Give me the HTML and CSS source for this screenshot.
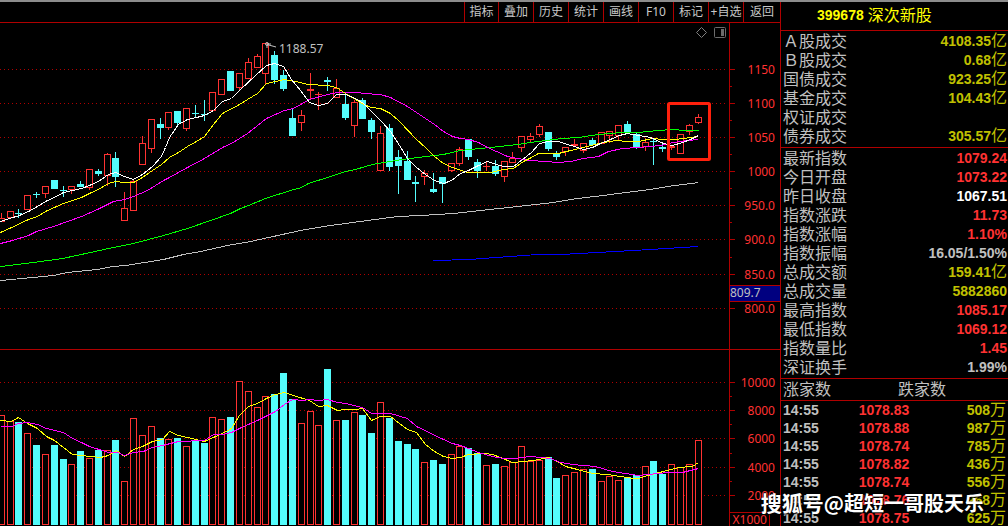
FILE: index.html
```html
<!DOCTYPE html>
<html lang="zh-CN">
<head>
<meta charset="utf-8">
<title>399678 深次新股</title>
<link rel="stylesheet" href="styles.css">
</head>
<body>
<div class="terminal">
  <main class="main">
    <nav class="toolbar">
      <button type="button">指标</button><button type="button">叠加</button><button type="button">历史</button><button type="button">统计</button><button type="button">画线</button><button type="button">F10</button><button type="button">标记</button><button type="button">+自选</button><button type="button">返回</button>
    </nav>
    <section class="panel price-panel">
      <svg class="plot" id="price-plot" role="img" aria-label="K线图"></svg>
      <svg class="axis" id="price-axis" role="img" aria-label="价格坐标"></svg>
      <div class="tools">
        <button type="button" aria-label="标记点"><svg width="12" height="12"><path d="M6.5 0.5L11.5 5.5L6.5 10.5L1.5 5.5Z" fill="none" stroke="#808080"/></svg></button>
        <button type="button" aria-label="侧栏"><svg width="12" height="12"><rect x="0.5" y="0.5" width="11" height="10" rx="1" fill="none" stroke="#6c6c6c"/><rect x="7" y="2" width="3" height="7" fill="#6c6c6c"/></svg></button>
      </div>
    </section>
    <section class="panel volume-panel">
      <svg class="plot" id="volume-plot" role="img" aria-label="成交量"></svg>
      <svg class="axis" id="volume-axis" role="img" aria-label="成交量坐标"></svg>
    </section>
  </main>
  <aside class="side">
    <h1 class="title"><b>399678</b><span>深次新股</span></h1>
    <dl class="rows">
      <div><dt>&#xFF21;股成交</dt><dd class="gold">4108.35<i>亿</i></dd></div>
      <div><dt>&#xFF22;股成交</dt><dd class="gold">0.68<i>亿</i></dd></div>
      <div><dt>国债成交</dt><dd class="gold">923.25<i>亿</i></dd></div>
      <div><dt>基金成交</dt><dd class="gold">104.43<i>亿</i></dd></div>
      <div><dt>权证成交</dt><dd></dd></div>
      <div><dt>债券成交</dt><dd class="gold">305.57<i>亿</i></dd></div>
    </dl>
    <dl class="rows">
      <div><dt>最新指数</dt><dd class="up">1079.24</dd></div>
      <div><dt>今日开盘</dt><dd class="up">1073.22</dd></div>
      <div><dt>昨日收盘</dt><dd class="flat">1067.51</dd></div>
      <div><dt>指数涨跌</dt><dd class="up">11.73</dd></div>
      <div><dt>指数涨幅</dt><dd class="up">1.10%</dd></div>
      <div><dt>指数振幅</dt><dd>16.05/1.50%</dd></div>
      <div><dt>总成交额</dt><dd class="gold">159.41<i>亿</i></dd></div>
      <div><dt>总成交量</dt><dd class="gold">5882860</dd></div>
      <div><dt>最高指数</dt><dd class="up">1085.17</dd></div>
      <div><dt>最低指数</dt><dd class="up">1069.12</dd></div>
      <div><dt>指数量比</dt><dd class="up">1.45</dd></div>
      <div><dt>深证换手</dt><dd>1.99%</dd></div>
    </dl>
    <div class="breadth"><span>涨家数</span><span>跌家数</span></div>
    <table class="ticks">
      <tbody>
        <tr><td>14:55</td><td class="up">1078.83</td><td class="gold">508<i>万</i></td></tr>
        <tr><td>14:55</td><td class="up">1078.88</td><td class="gold">987<i>万</i></td></tr>
        <tr><td>14:55</td><td class="up">1078.74</td><td class="gold">785<i>万</i></td></tr>
        <tr><td>14:55</td><td class="up">1078.82</td><td class="gold">436<i>万</i></td></tr>
        <tr><td>14:55</td><td class="up">1078.74</td><td class="gold">556<i>万</i></td></tr>
        <tr><td>14:55</td><td class="up">1078.76</td><td class="gold">968<i>万</i></td></tr>
        <tr><td>14:55</td><td class="up">1078.75</td><td class="gold">625<i>万</i></td></tr>
      </tbody>
    </table>
  </aside>
  <div class="watermark"><span>搜狐号</span>@超短一哥股天乐</div>
</div>
<script src="chart.js"></script>
</body>
</html>
```
FILE: styles.css
```css
* {
  box-sizing: border-box;
  margin: 0;
  padding: 0;
}

body {
  background: #000;
  color: #c0c0c0;
  font-family: "Liberation Sans", "Noto Sans CJK SC", sans-serif;
  font-size: 14px;
}

.terminal {
  position: relative;
  display: grid;
  grid-template-columns: minmax(0, 1fr) 228px;
  height: 100vh;
  overflow: hidden;
  border-top: 2px solid #8c8c8c;
}

.main {
  display: flex;
  flex-direction: column;
  min-height: 0;
}

.toolbar {
  display: flex;
  justify-content: flex-end;
  height: 21px;
  border-bottom: 1px solid #b00000;
}

.toolbar button {
  width: 35px;
  border: 0;
  border-left: 1px solid #b00000;
  background: none;
  color: #c8c8c8;
  font-family: "Noto Sans", "Noto Sans CJK SC", sans-serif;
  font-size: 12px;
  line-height: 20px;
  white-space: nowrap;
}

.toolbar button:first-child {
  width: 34px;
}

.toolbar button:last-child {
  width: 37px;
}

.panel {
  position: relative;
  display: grid;
  grid-template-columns: minmax(0, 1fr) 51px;
}

.price-panel {
  flex: none;
  border-bottom: 1px solid #b00000;
}

.volume-panel {
  flex: 1;
  min-height: 0;
}

.plot,
.axis {
  display: block;
  width: 100%;
  height: 326px;
  overflow: hidden;
}

.volume-panel .plot,
.volume-panel .axis {
  height: 176px;
}

.axis {
  border-left: 1px solid #b00000;
}

.tools {
  position: absolute;
  top: 4px;
  right: 54px;
  display: flex;
  gap: 7px;
}

.tools button {
  width: 12px;
  height: 12px;
  border: 0;
  background: none;
}

.tools svg {
  display: block;
}

svg text {
  font-family: "Noto Sans", sans-serif;
  font-size: 12px;
  fill: #c0c0c0;
}

svg text.scale {
  fill: #ff3232;
  text-anchor: end;
}

.side {
  border-left: 1px solid #b00000;
  min-height: 0;
  overflow: hidden;
}

.title {
  display: flex;
  gap: 4px;
  height: 29px;
  padding-left: 36px;
  border-bottom: 1px solid #b00000;
  color: #ffff00;
  font-size: 14px;
  line-height: 27px;
}

.title span {
  font-size: 16px;
  font-weight: 400;
}

.rows {
  padding: 1px 1px 1px 2px;
  border-bottom: 1px solid #b00000;
}

.rows div {
  display: flex;
  justify-content: space-between;
  height: 19px;
  line-height: 19px;
}

.rows dt,
.side i,
.breadth {
  font-family: "Noto Sans CJK SC", sans-serif;
  font-size: 16px;
  font-style: normal;
  font-weight: 400;
}

.rows dt {
  line-height: 17px;
}

.side i {
  line-height: 0;
}

.rows dd {
  font-weight: bold;
}

.up {
  color: #ff3232;
}

.gold {
  color: #c0c000;
}

.flat {
  color: #fff;
}

.breadth {
  display: grid;
  grid-template-columns: 115px 1fr;
  height: 22px;
  padding-left: 2px;
  border-bottom: 1px solid #b00000;
  line-height: 19px;
}

.ticks {
  width: 100%;
  table-layout: fixed;
  border-collapse: collapse;
  font-weight: bold;
}

.ticks td {
  height: 18px;
  padding-left: 2px;
  line-height: 18px;
}

.ticks td:last-child {
  padding-right: 2px;
  text-align: right;
}

.watermark {
  position: absolute;
  right: 24px;
  bottom: 8px;
  color: #fff;
  font-family: "Noto Sans CJK SC", sans-serif;
  font-size: 20px;
  font-weight: 700;
  line-height: 30px;
  text-shadow: 1px 1px 1px #000;
  white-space: nowrap;
}

.watermark span {
  font-size: 21px;
}
```
FILE: chart.js
```javascript
const NS = "http://www.w3.org/2000/svg";
const RED = "#ff3232";
const CYAN = "#54fcfc";
const FRAME = "#b00000";

function add(parent, name, attrs, text) {
  const el = document.createElementNS(NS, name);
  for (const key in attrs) el.setAttribute(key, attrs[key]);
  if (text) el.textContent = text;
  parent.appendChild(el);
  return el;
}

function layer(id, top) {
  return add(document.getElementById(id), "g", { transform: `translate(0,${-top})` });
}

const barX = i => Math.floor(8.82 * i - 1.7);

// kind, body top, body bottom, wick top, wick bottom
const candles = [
  "r 218 222 213 222", "r 211 218 211 218", "c 213 214 209 218", "r 195 210 195 210",
  "c 194 195 192 198", "r 186 194 186 198", "c 180 189 180 189", "c 190 191 186 197",
  "r 186 190 186 194", "c 184 187 181 187", "r 169 188 169 190", "c 171 174 169 176",
  "r 154 176 153 186", "c 158 177 152 187", "r 208 221 192 221", "r 181 211 179 211",
  "r 143 165 136 165", "r 119 149 119 153", "c 124 128 118 139", "r 112 128 112 130",
  "c 111 123 111 125", "r 108 129 108 131", "c 113 114 105 117", "c 114 115 100 121",
  "r 92 111 92 111", "r 79 95 79 95", "c 71 91 71 91", "r 73 88 73 90",
  "r 62 79 58 79", "r 56 68 54 68", "r 43 74 43 84", "c 55 80 51 84",
  "c 75 89 70 91", "c 118 136 108 136", "r 115 123 110 131", "r 89 91 73 99",
  "r 94 95 92 110", "c 80 82 77 91", "r 88 98 79 98", "c 104 118 93 120",
  "r 102 126 100 137", "c 100 119 98 119", "c 120 132 118 139", "r 133 171 126 171",
  "c 128 167 124 171", "c 157 166 150 194", "c 161 180 151 180", "c 182 184 176 202",
  "r 173 177 170 185", "c 189 192 173 193", "c 177 184 177 203", "r 163 171 163 172",
  "r 149 164 147 166", "c 139 157 139 160", "c 162 171 159 178", "r 166 167 161 171",
  "c 166 174 160 176", "r 161 177 161 182", "r 158 163 152 163", "r 136 148 136 152",
  "r 136 140 133 142", "r 126 135 124 137", "c 132 149 132 151", "c 154 157 151 160",
  "r 147 152 147 156", "r 144 146 139 147", "r 143 151 143 153", "c 140 145 138 146",
  "r 132 144 132 144", "r 131 136 131 143", "r 125 136 125 140", "c 124 133 121 133",
  "c 134 147 133 149", "r 142 147 138 151", "c 141 142 139 165", "c 147 149 143 152",
  "r 146 148 145 150", "r 134 154 134 154", "r 125 132 124 135", "r 117 123 114 124"
];

const volumes = [
  415, 421, 422, 433, 445, 454, 445, 459, 464, 451, 458, 450, 450, 440, 481, 418,
  435, 426, 438, 439, 438, 446, 441, 443, 417, 419, 417, 381, 391, 407, 396, 394,
  373, 399, 423, 411, 425, 369, 420, 420, 412, 415, 433, 402, 418, 441, 444, 449,
  462, 460, 464, 454, 446, 448, 453, 465, 464, 466, 462, 446, 461, 460, 457, 478,
  475, 472, 469, 469, 481, 476, 480, 477, 475, 466, 461, 474, 464, 467, 464, 440
];

const priceLines = {
  "#0000ff": "433,260 470,259 482,258 537,254 560,254 597,252 650,249 698,246",
  "#c0c0c0": "0,280 43,276 53,275 67,272 97,269 112,266 125,265 163,259 183,254 200,251 227,245 250,241 300,230 330,225 367,220 397,216 420,215 453,213 480,210 517,206 553,202 577,198 603,195 617,193 650,189 667,186 698,182",
  "#00ff00": "0,266 33,262 62,258 90,252 108,248 133,243 163,235 187,228 213,219 230,213 240,208 248,205 265,198 290,190 301,187 308,183 327,177 345,171 355,169 372,164 395,160 417,157 443,154 460,150 490,147 517,144 537,141 562,138 578,137 598,134 622,132 638,132 657,130 673,129 683,130 698,130",
  "#ff00ff": "0,243 12,240 28,235 36,231 53,226 81,216 97,209 113,201 124,199 133,196 147,190 163,180 169,177 187,167 204,158 222,147 231,143 247,133 266,118 275,114 284,110 293,108 309,99 327,94 337,92 357,92 363,93 380,94 390,97 407,106 416,112 425,118 434,124 443,131 452,136 460,138 468,139 478,142 487,147 496,151 507,156 517,158 530,160 558,162 570,161 583,158 598,156 608,151 622,148 638,147 660,145 673,142 687,140 698,139",
  "#ffff00": "0,232 9,228 28,219 37,216 45,211 54,207 63,203 81,197 89,193 98,189 108,183 115,181 124,182 133,182 142,177 152,170 161,164 169,157 178,152 187,146 196,141 204,136 213,124 222,113 239,104 247,99 257,93 266,83 275,81 284,79 295,81 308,84 327,85 336,87 345,93 355,99 363,104 371,107 380,108 390,113 399,121 416,139 425,147 434,156 443,163 452,167 467,172 490,172 503,169 513,168 523,161 531,157 538,153 558,153 570,150 583,147 598,143 615,140 627,141 638,141 652,138 662,139 675,139 690,137 698,136",
  "#ffffff": "0,221 9,218 19,215 28,211 37,206 45,201 54,197 63,192 72,190 81,188 89,185 98,181 108,174 115,172 124,176 133,179 142,174 152,166 161,156 165,147 169,137 178,124 187,119 196,117 204,115 213,110 222,101 231,98 239,90 255,75 266,65 274,63 283,66 291,79 300,90 309,102 318,105 327,103 336,94 345,94 355,98 363,103 372,112 382,122 390,131 399,145 407,158 416,167 425,174 434,180 443,183 451,180 460,173 468,170 478,165 487,161 496,164 503,166 513,166 522,159 531,152 539,143 548,141 558,141 567,144 574,146 583,149 592,147 600,143 610,139 619,135 627,133 638,135 650,137 663,143 672,145 682,142 690,139 698,135"
};

const volumeLines = {
  "#ffff00": "0,420 11,421 18,417 27,423 37,428 46,436 54,440 63,447 72,454 80,455 100,457 108,455 116,450 124,456 133,449 142,446 152,441 162,439 169,431 178,435 187,437 204,441 213,437 222,433 231,428 239,415 248,406 257,403 266,398 275,394 284,392 293,395 309,400 318,406 327,405 337,410 345,409 355,409 362,408 371,420 380,416 390,416 399,423 407,429 416,432 425,444 434,451 443,456 452,458 460,457 468,454 484,453 492,454 500,457 512,462 533,460 548,457 557,461 565,466 577,469 592,473 607,474 633,478 638,478 647,475 663,471 678,467 692,466 698,462",
  "#ff00ff": "0,426 11,426 18,423 27,422 37,424 46,428 63,432 72,438 81,442 89,446 108,452 117,452 124,455 133,452 143,451 152,447 162,445 178,441 204,440 213,434 222,434 231,432 239,428 248,424 257,420 275,411 284,404 292,399 302,400 309,399 318,400 327,399 337,402 345,403 362,407 371,413 390,413 407,418 416,426 443,439 452,443 460,445 468,448 478,452 492,456 503,458 513,458 530,456 550,458 560,462 572,464 595,466 612,471 638,475 667,472 682,472 698,468"
};

function grid(g, ys) {
  for (const y of ys) {
    add(g, "line", { x1: 0, x2: 726, y1: y + 0.5, y2: y + 0.5, stroke: FRAME, "stroke-dasharray": "1 3", "shape-rendering": "crispEdges" });
  }
}

function bar(g, kind, x, top, bottom) {
  if (kind === "c" || bottom - top < 3) {
    add(g, "rect", { x, y: top, width: 7, height: bottom - top, fill: kind === "c" ? CYAN : RED });
  } else {
    add(g, "rect", { x: x + 0.5, y: top + 0.5, width: 6, height: bottom - top - 1, fill: "#000", stroke: RED });
  }
}

function curves(g, lines) {
  for (const color in lines) {
    add(g, "polyline", { points: lines[color], transform: "translate(0.5,0.5)", fill: "none", stroke: color, "shape-rendering": "crispEdges" });
  }
}

function ticks(g, ys, length) {
  for (const y of ys) add(g, "rect", { x: 0, y, width: length, height: 1, fill: FRAME });
}

const price = layer("price-plot", 23);
grid(price, [69, 103, 137, 171, 205, 239, 274, 308]);
candles.forEach((row, i) => {
  const [kind, ...n] = row.split(" ");
  const [top, bottom, high, low] = n.map(Number);
  add(price, "rect", { x: barX(i) + 3, y: high, width: 1, height: low - high, fill: kind === "c" ? CYAN : RED });
  bar(price, kind, barX(i), top, bottom);
});
curves(price, priceLines);
add(price, "path", { d: "M276 47L267 44.5M267 48V44H271", fill: "none", stroke: "#c0c0c0" });
add(price, "circle", { cx: 267, cy: 44, r: 1.5, fill: "none", stroke: "#c0c0c0" });
add(price, "text", { x: 279, y: 53 }, "1188.57");
add(price, "rect", { x: 668.5, y: 103.5, width: 41, height: 56, rx: 1, fill: "none", stroke: "#ff200c", "stroke-width": 3 });

const scale = layer("price-axis", 23);
const marks = { 69: "1150", 103: "1100", 137: "1050", 171: "1000", 205: "950.0", 239: "900.0", 274: "850.0", 308: "800.0" };
ticks(scale, Object.keys(marks), 5);
ticks(scale, [86, 120, 154, 188, 222, 257], 2);
for (const y in marks) add(scale, "text", { x: 45, y: Number(y) + 5, class: "scale" }, marks[y]);
add(scale, "rect", { x: 0, y: 285, width: 50, height: 17, fill: FRAME });
add(scale, "rect", { x: 0, y: 286, width: 50, height: 15, fill: "#000080" });
add(scale, "text", { x: 0, y: 297 }, "809.7");

const volume = layer("volume-plot", 350);
grid(volume, [382, 410, 438, 467, 495]);
volumes.forEach((top, i) => bar(volume, candles[i][0], barX(i), top, 525));
curves(volume, volumeLines);

const volumeScale = layer("volume-axis", 350);
const volumeMarks = { 382: "10000", 410: "8000", 438: "6000", 467: "4000", 495: "2000" };
ticks(volumeScale, Object.keys(volumeMarks), 5);
ticks(volumeScale, [396, 424, 453, 481], 2);
for (const y in volumeMarks) add(volumeScale, "text", { x: 45, y: Number(y) + 5, class: "scale" }, volumeMarks[y]);
add(volumeScale, "path", { d: "M0 512.5H39.5V526", fill: "none", stroke: FRAME });
add(volumeScale, "text", { x: 37, y: 524, class: "scale" }, "X1000");
```
